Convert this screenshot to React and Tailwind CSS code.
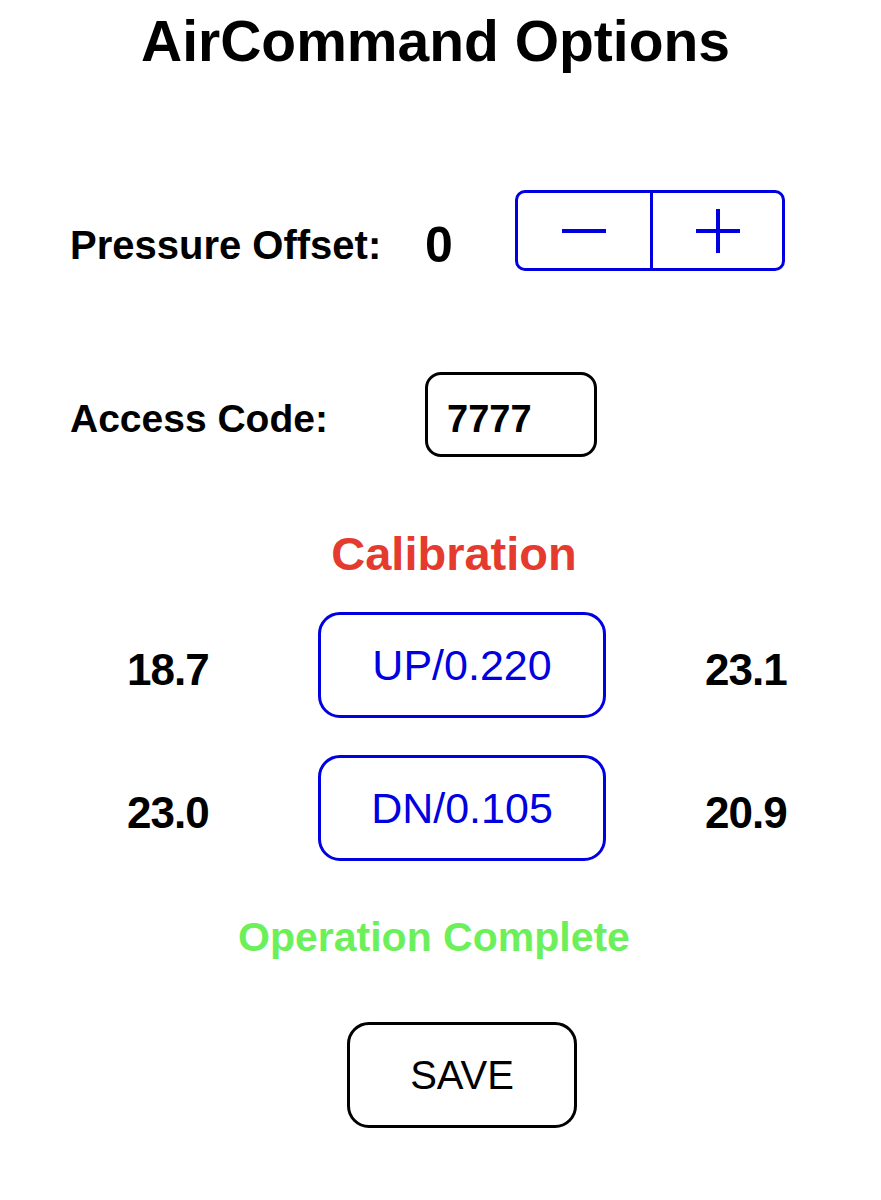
const font = { fontFamily: '"Liberation Sans", Arial, sans-serif' }

function MinusIcon() {
  return (
    <svg width="44" height="44" viewBox="0 0 44 44" fill="none" stroke="#0000e0" strokeWidth="4">
      <path d="M0 22h44" />
    </svg>
  )
}

function PlusIcon() {
  return (
    <svg width="44" height="44" viewBox="0 0 44 44" fill="none" stroke="#0000e0" strokeWidth="4">
      <path d="M0 22h44M22 0v44" />
    </svg>
  )
}

function CalRow({ left, label, right, className }) {
  return (
    <div className={`flex items-start pl-[127px] ${className}`}>
      <div className="w-[191px] mt-[36px] text-[44px] leading-none font-bold tracking-[-1px] text-black">{left}</div>
      <button className="w-[288px] h-[106px] flex items-center justify-center border-[3px] border-[#0000e0] rounded-[22px] text-[43px] leading-none text-[#0000e0]">
        {label}
      </button>
      <div className="pl-[99px] mt-[36px] text-[44px] leading-none font-bold tracking-[-1px] text-black">{right}</div>
    </div>
  )
}

export default function App() {
  return (
    <div className="w-[881px] h-[1200px] bg-white text-black" style={font}>
      {/* Title */}
      <h1 className="pt-[13px] pr-[10px] text-center text-[57px] leading-none font-bold">AirCommand Options</h1>

      {/* Pressure offset */}
      <div className="mt-[120px] pl-[70px] flex items-start h-[81px]">
        <div className="w-[355px] mt-[35px] text-[40px] leading-none font-bold">Pressure Offset:</div>
        <div className="w-[90px] mt-[30px] text-[50px] leading-none font-bold">0</div>
        <div className="flex w-[270px] h-[81px] border-[3px] border-[#0000e0] rounded-[10px]">
          <button className="w-[132px] flex items-center justify-center">
            <MinusIcon />
          </button>
          <button className="flex-1 flex items-center justify-center border-l-[3px] border-[#0000e0]">
            <PlusIcon />
          </button>
        </div>
      </div>

      {/* Access code */}
      <div className="mt-[101px] pl-[70px] flex items-start h-[85px]">
        <div className="w-[355px] mt-[27px] text-[39px] leading-none font-bold">Access Code:</div>
        <div className="w-[172px] h-[85px] border-[3px] border-black rounded-[16px] pl-[19px] pt-[25px] text-[38px] leading-none font-bold">
          7777
        </div>
      </div>

      {/* Calibration */}
      <div className="mt-[73px] pl-[27px] text-center text-[47px] leading-none font-bold text-[#e53b2f]">Calibration</div>

      <CalRow className="mt-[35px]" left="18.7" label="UP/0.220" right="23.1" />
      <CalRow className="mt-[37px]" left="23.0" label="DN/0.105" right="20.9" />

      <div className="mt-[56px] pr-[13px] text-center text-[41px] leading-none font-bold text-[#6cf05a]">Operation Complete</div>

      <div className="mt-[64px] pl-[347px]">
        <button className="w-[230px] h-[106px] flex items-center justify-center border-[3px] border-black rounded-[22px] text-[40px] leading-none">
          SAVE
        </button>
      </div>
    </div>
  )
}
